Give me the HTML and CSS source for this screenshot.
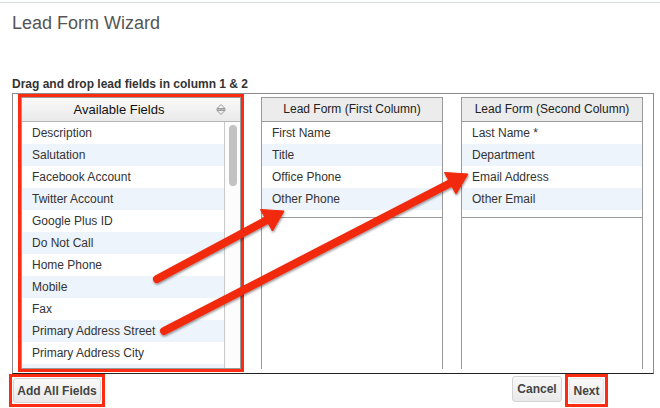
FILE: index.html
```html
<!DOCTYPE html>
<html>
<head>
<meta charset="utf-8">
<link rel="stylesheet" href="styles.css">
</head>
<body>
<div class="topline"></div>
<h1 class="title">Lead Form Wizard</h1>
<div class="hint">Drag and drop lead fields in column 1 &amp; 2</div>
<div class="board">
  <div class="avail">
    <div class="avail-head">
      <span class="avail-title">Available Fields</span>
      <svg class="sort" width="10" height="13" viewBox="0 0 10 13"><polygon points="1,5.5 5,1.5 9,5.5" fill="none" stroke="#999" stroke-width="1"/><polygon points="1,7.5 5,11.5 9,7.5" fill="none" stroke="#999" stroke-width="1"/><line x1="0" y1="6.5" x2="10" y2="6.5" stroke="#bbb" stroke-width="1"/></svg>
    </div>
    <div class="avail-body">
      <ul class="rows">
        <li>Description</li>
        <li>Salutation</li>
        <li>Facebook Account</li>
        <li>Twitter Account</li>
        <li>Google Plus ID</li>
        <li>Do Not Call</li>
        <li>Home Phone</li>
        <li>Mobile</li>
        <li>Fax</li>
        <li>Primary Address Street</li>
        <li>Primary Address City</li>
        <li></li>
      </ul>
      <div class="track"><div class="thumb"></div></div>
    </div>
  </div>
  <div class="col">
    <div class="col-head">Lead Form (First Column)</div>
    <ul class="rows col-rows">
      <li>First Name</li>
      <li>Title</li>
      <li>Office Phone</li>
      <li>Other Phone</li>
    </ul>
  </div>
  <div class="col">
    <div class="col-head">Lead Form (Second Column)</div>
    <ul class="rows col-rows">
      <li>Last Name *</li>
      <li>Department</li>
      <li>Email Address</li>
      <li>Other Email</li>
    </ul>
  </div>
</div>
<div class="actions">
  <span class="marker"><button class="btn btn-add">Add All Fields</button></span>
  <button class="btn btn-cancel">Cancel</button>
  <span class="marker marker-next"><button class="btn btn-next">Next</button></span>
</div>
<svg class="arrows" width="660" height="408" viewBox="0 0 660 408">
  <defs>
    <filter id="sh" x="-10%" y="-10%" width="120%" height="130%">
      <feDropShadow dx="0.6" dy="1.4" stdDeviation="1.1" flood-color="#000" flood-opacity="0.45"/>
    </filter>
  </defs>
  <g filter="url(#sh)" fill="#f2290f" stroke="#f2290f">
    <line x1="157" y1="279" x2="268" y2="219.5" stroke-width="8" stroke-linecap="round"/>
    <polygon points="284,211 272.5,231 260.5,209.5" stroke-width="1" stroke-linejoin="round"/>
    <line x1="164" y1="331" x2="452" y2="182.3" stroke-width="8" stroke-linecap="round"/>
    <polygon points="468,174 456,194 444.5,172.5" stroke-width="1" stroke-linejoin="round"/>
  </g>
</svg>
</body>
</html>
```

FILE: styles.css
```css
* { box-sizing: border-box; }

body {
  margin: 0;
  width: 660px;
  height: 408px;
  position: relative;
  overflow: hidden;
  background: #fff;
  font-family: "Liberation Sans", Arial, sans-serif;
  color: #333;
}

.topline {
  height: 1px;
  margin-top: 2px;
  background: #d3dbe3;
}

.title {
  margin: 9px 0 0 12px;
  font-size: 18px;
  line-height: 22px;
  font-weight: normal;
  color: #555;
}

.hint {
  margin: 43px 0 0 12px;
  font-size: 12px;
  line-height: 14px;
  font-weight: bold;
  color: #333;
}

.board {
  margin: 2px 0 0 12px;
  width: 642px;
  height: 281px;
  border: 1px solid #8a8a8a;
  border-bottom-color: #222;
  padding: 3px 10px 0 8px;
  display: flex;
  align-items: flex-start;
  gap: 20px;
  overflow: hidden;
}

.avail {
  width: 220px;
  height: 272px;
  flex: none;
  border: 1px solid #9a9a9a;
  outline: 3px solid #fb2c12;
  display: flex;
  flex-direction: column;
  overflow: hidden;
}

.avail-head {
  height: 24px;
  flex: none;
  display: flex;
  align-items: center;
  border-bottom: 1px solid #b5b5b5;
  background: linear-gradient(#fafafa, #e9e9e9);
}

.avail-title {
  flex: 1;
  text-align: center;
  font-size: 13px;
  color: #111;
}

.sort {
  margin-right: 14px;
  display: block;
}

.avail-body {
  flex: 1;
  display: flex;
  min-height: 0;
}

.rows {
  list-style: none;
  margin: 0;
  padding: 0;
}

.avail-body .rows {
  flex: 1;
  overflow: hidden;
}

.rows li {
  height: 22px;
  line-height: 23px;
  padding-left: 10px;
  font-size: 12px;
  color: #333;
  white-space: nowrap;
}

.rows li:nth-child(even) {
  background: #edf4fc;
}

.track {
  width: 16px;
  flex: none;
  border-left: 1px solid #c8c8c8;
  background: #fcfcfc;
  padding: 3px 0 0 4px;
}

.thumb {
  width: 8px;
  height: 61px;
  border-radius: 4px;
  background: #c2c2c2;
}

.col {
  width: 182px;
  height: 272px;
  flex: none;
  border: 1px solid #9a9a9a;
  border-bottom: none;
}

.col + .col {
  margin-left: -2px;
}

.col-head {
  height: 24px;
  line-height: 23px;
  text-align: center;
  font-size: 12px;
  color: #222;
  background: #ececec;
  border-bottom: 1px solid #9a9a9a;
}

.col-rows {
  min-height: 96px;
  border-bottom: 1px solid #9a9a9a;
}

.actions {
  display: flex;
  align-items: flex-start;
  padding: 0 52px 0 9px;
}

.marker {
  display: flex;
  padding: 1px;
  border: 3px solid #fb2c12;
}

.marker-next {
  margin-left: 3px;
}

.btn {
  height: 25px;
  padding: 0;
  font-family: "Liberation Sans", Arial, sans-serif;
  font-size: 12px;
  font-weight: bold;
  color: #444;
  background: linear-gradient(#f9f9f9, #e9e9e9);
  border: 1px solid #d4d4d4;
  border-radius: 3px;
}

.btn-add {
  width: 88px;
}

.btn-cancel {
  margin-left: auto;
  margin-top: 2px;
  width: 50px;
  height: 26px;
}

.btn-next {
  width: 35px;
  border-color: #e6e6e6;
}

.arrows {
  position: absolute;
  top: 0;
  left: 0;
  pointer-events: none;
}
```
